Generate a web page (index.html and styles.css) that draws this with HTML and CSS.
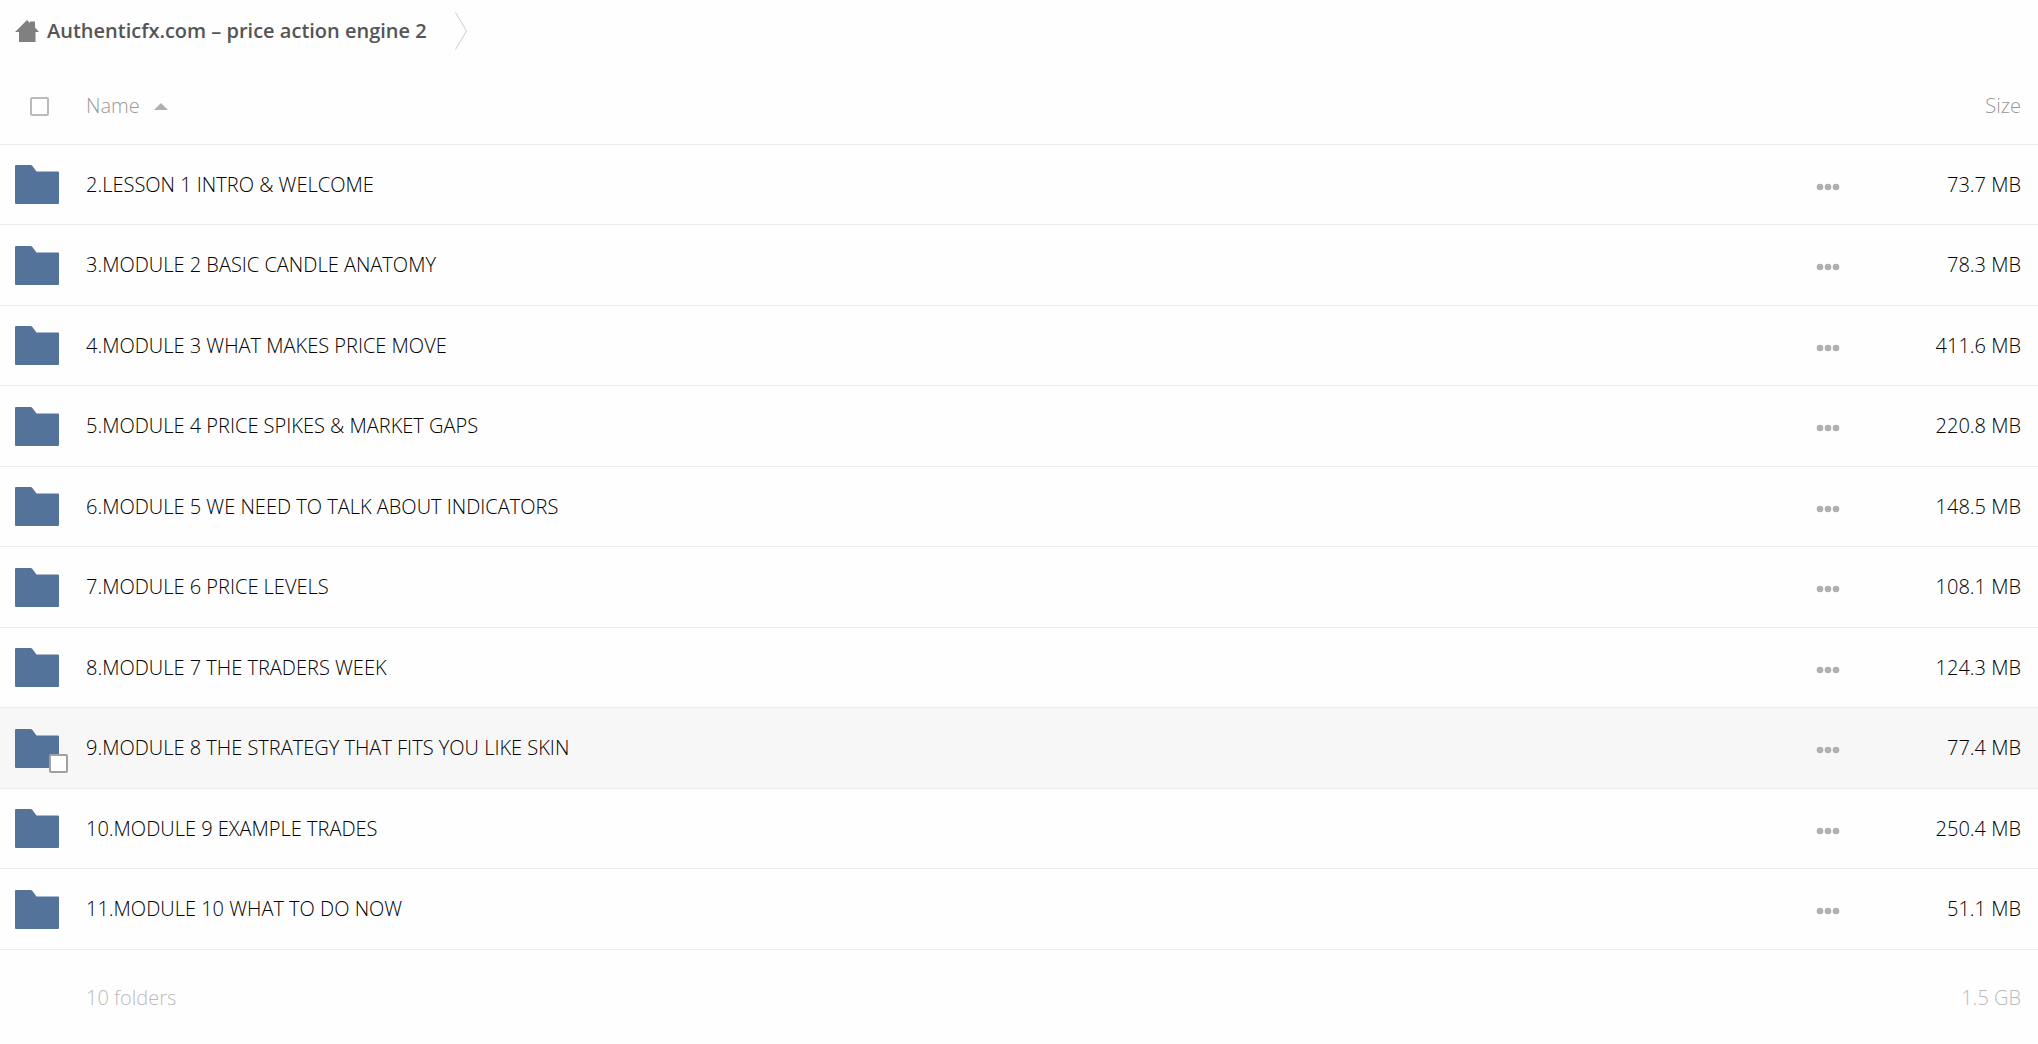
FILE: index.html
```
<!DOCTYPE html>
<html lang="en">
<head>
  <meta charset="UTF-8">
  <title>Authenticfx.com – price action engine 2</title>
  <link rel="stylesheet" href="styles.css">
</head>
<body>
  <svg class="sprite" aria-hidden="true">
    <symbol id="folder" viewBox="0 0 44 39">
      <path d="M1 0H15.500Q16.500 0 17.200 .8L21.500 6.500H43Q44 6.500 44 7.500V38Q44 39 43 39H1Q0 39 0 38V1Q0 0 1 0Z"/>
    </symbol>
    <symbol id="dots" viewBox="0 0 24 8">
      <circle cx="4" cy="4" r="3.300"/>
      <circle cx="12" cy="4" r="3.300"/>
      <circle cx="20" cy="4" r="3.300"/>
    </symbol>
  </svg>

  <nav class="breadcrumb" aria-label="Breadcrumb">
    <a href="#" class="crumb">
      <svg class="home" viewBox="0 0 24 22" aria-hidden="true">
        <path d="M12 0L15 3V1.500H20V7.500L24 12H20.500V22H4V12H0Z"/>
      </svg>
      Authenticfx.com – price action engine 2
    </a>
    <svg class="crumb-arrow" viewBox="0 0 12 38" aria-hidden="true">
      <path d="M.5 .5L11.500 19L.5 37.500"/>
    </svg>
  </nav>

  <table class="files">
    <thead>
      <tr>
        <th class="select"><input type="checkbox" class="check" aria-label="Select all"></th>
        <th class="name"><button class="sort">Name <span class="sort-arrow"></span></button></th>
        <th class="actions"></th>
        <th class="size">Size</th>
      </tr>
    </thead>
    <tbody>
      <tr>
        <td class="select"><svg class="folder"><use href="#folder"/></svg></td>
        <td class="name"><a href="#">2.LESSON 1 INTRO &amp; WELCOME</a></td>
        <td class="actions"><button class="more" aria-label="Actions"><svg><use href="#dots"/></svg></button></td>
        <td class="size">73.7 MB</td>
      </tr>
      <tr>
        <td class="select"><svg class="folder"><use href="#folder"/></svg></td>
        <td class="name"><a href="#">3.MODULE 2 BASIC CANDLE ANATOMY</a></td>
        <td class="actions"><button class="more" aria-label="Actions"><svg><use href="#dots"/></svg></button></td>
        <td class="size">78.3 MB</td>
      </tr>
      <tr>
        <td class="select"><svg class="folder"><use href="#folder"/></svg></td>
        <td class="name"><a href="#">4.MODULE 3 WHAT MAKES PRICE MOVE</a></td>
        <td class="actions"><button class="more" aria-label="Actions"><svg><use href="#dots"/></svg></button></td>
        <td class="size">411.6 MB</td>
      </tr>
      <tr>
        <td class="select"><svg class="folder"><use href="#folder"/></svg></td>
        <td class="name"><a href="#">5.MODULE 4 PRICE SPIKES &amp; MARKET GAPS</a></td>
        <td class="actions"><button class="more" aria-label="Actions"><svg><use href="#dots"/></svg></button></td>
        <td class="size">220.8 MB</td>
      </tr>
      <tr>
        <td class="select"><svg class="folder"><use href="#folder"/></svg></td>
        <td class="name"><a href="#">6.MODULE 5 WE NEED TO TALK ABOUT INDICATORS</a></td>
        <td class="actions"><button class="more" aria-label="Actions"><svg><use href="#dots"/></svg></button></td>
        <td class="size">148.5 MB</td>
      </tr>
      <tr>
        <td class="select"><svg class="folder"><use href="#folder"/></svg></td>
        <td class="name"><a href="#">7.MODULE 6 PRICE LEVELS</a></td>
        <td class="actions"><button class="more" aria-label="Actions"><svg><use href="#dots"/></svg></button></td>
        <td class="size">108.1 MB</td>
      </tr>
      <tr>
        <td class="select"><svg class="folder"><use href="#folder"/></svg></td>
        <td class="name"><a href="#">8.MODULE 7 THE TRADERS WEEK</a></td>
        <td class="actions"><button class="more" aria-label="Actions"><svg><use href="#dots"/></svg></button></td>
        <td class="size">124.3 MB</td>
      </tr>
      <tr class="active">
        <td class="select">
          <div class="thumb">
            <svg class="folder"><use href="#folder"/></svg>
            <input type="checkbox" class="check" aria-label="Select 9.MODULE 8">
          </div>
        </td>
        <td class="name"><a href="#">9.MODULE 8 THE STRATEGY THAT FITS YOU LIKE SKIN</a></td>
        <td class="actions"><button class="more" aria-label="Actions"><svg><use href="#dots"/></svg></button></td>
        <td class="size">77.4 MB</td>
      </tr>
      <tr>
        <td class="select"><svg class="folder"><use href="#folder"/></svg></td>
        <td class="name"><a href="#">10.MODULE 9 EXAMPLE TRADES</a></td>
        <td class="actions"><button class="more" aria-label="Actions"><svg><use href="#dots"/></svg></button></td>
        <td class="size">250.4 MB</td>
      </tr>
      <tr>
        <td class="select"><svg class="folder"><use href="#folder"/></svg></td>
        <td class="name"><a href="#">11.MODULE 10 WHAT TO DO NOW</a></td>
        <td class="actions"><button class="more" aria-label="Actions"><svg><use href="#dots"/></svg></button></td>
        <td class="size">51.1 MB</td>
      </tr>
    </tbody>
    <tfoot>
      <tr>
        <td class="select"></td>
        <td class="name">10 folders</td>
        <td class="actions"></td>
        <td class="size">1.5 GB</td>
      </tr>
    </tfoot>
  </table>
</body>
</html>
```
FILE: styles.css
```
body {
  margin: 0;
  background: #fefefe;
  color: #000;
  font-family: "Open Sans", sans-serif;
  font-size: 20px;
  font-weight: 300;
  line-height: 28px;
}

a {
  color: inherit;
  text-decoration: none;
}

button {
  padding: 0;
  border: none;
  background: none;
  color: inherit;
  font: inherit;
  cursor: pointer;
}

.sprite {
  display: none;
}

.breadcrumb {
  display: flex;
  align-items: center;
  gap: 28px;
  height: 62px;
  padding-left: 15px;
}

.crumb {
  display: flex;
  align-items: center;
  gap: 8px;
  color: #555;
  font-weight: 600;
}

.home {
  width: 24px;
  height: 22px;
  fill: #808080;
}

.crumb-arrow {
  width: 12px;
  height: 38px;
  fill: none;
  stroke: #ccc;
}

.files {
  width: 100%;
  border-collapse: separate;
  border-spacing: 0;
  table-layout: fixed;
}

.files th,
.files td {
  box-sizing: border-box;
  height: 80px;
  padding: 0;
  border-bottom: 1px solid #ededed;
  font-weight: 300;
  text-align: left;
  vertical-align: middle;
}

.files th {
  height: 83px;
  padding-top: 6px;
  color: #999;
}

.files tbody tr:nth-child(even) td {
  height: 81px;
}

.files tfoot td {
  height: 95px;
  border-bottom: none;
  color: #bbb;
}

.files .select {
  width: 86px;
  padding-left: 15px;
}

.files th.select {
  padding-left: 30px;
}

.files .actions {
  width: 114px;
}

.files .size {
  width: 108px;
  padding-right: 17px;
  text-align: right;
}

.active {
  background: #f7f7f7;
}

.thumb {
  position: relative;
  width: 44px;
}

.folder {
  display: block;
  width: 44px;
  height: 39px;
  fill: #54739b;
}

.check {
  display: block;
  box-sizing: border-box;
  width: 19px;
  height: 19px;
  margin: 0;
  border: 2px solid #bbb;
  border-radius: 2px;
  background: #fff;
  appearance: none;
}

.check:checked {
  background: #54739b;
}

.thumb .check {
  position: absolute;
  right: -9px;
  bottom: -5px;
  border-color: #a0a0a0;
}

.sort {
  display: flex;
  align-items: center;
  gap: 14px;
}

.sort-arrow {
  border: 7px solid transparent;
  border-top: none;
  border-bottom-color: #b0b0b0;
}

.more {
  display: block;
  padding-top: 4px;
}

.more svg {
  display: block;
  width: 24px;
  height: 8px;
  fill: #b0b0b0;
}
```
